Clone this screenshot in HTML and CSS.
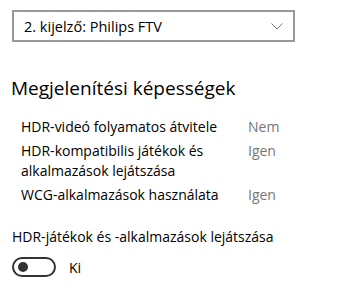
FILE: index.html
```html
<!DOCTYPE html>
<html lang="hu">
<head>
<meta charset="utf-8">
<link rel="stylesheet" href="styles.css">
</head>
<body>
<div class="page">
  <div class="select">
    <span class="select-text">2. kijelző: Philips FTV</span>
    <svg class="chev" width="12" height="7" viewBox="0 0 12 7"><path d="M0.5 0.5 L6 6 L11.5 0.5" fill="none" stroke="#777" stroke-width="1"/></svg>
  </div>
  <h2 class="heading">Megjelenítési képességek</h2>
  <div class="caps">
    <div class="cap-row"><span class="cap-name">HDR-videó folyamatos átvitele</span><span class="cap-val">Nem</span></div>
    <div class="cap-row"><span class="cap-name">HDR-kompatibilis játékok és alkalmazások lejátszása</span><span class="cap-val">Igen</span></div>
    <div class="cap-row"><span class="cap-name">WCG-alkalmazások használata</span><span class="cap-val">Igen</span></div>
  </div>
  <div class="label">HDR-játékok és -alkalmazások lejátszása</div>
  <div class="toggle-row">
    <span class="toggle"><span class="knob"></span></span>
    <span class="toggle-text">Ki</span>
  </div>
</div>
</body>
</html>
```
FILE: styles.css
```css
html, body { margin: 0; padding: 0; background: #fff; }
body { font-family: "Open Sans", "Noto Sans", sans-serif; color: #000; }
.page { padding: 10px 0 0 12px; }
.select {
  height: 28px;
  border: 2px solid #999;
  display: flex; align-items: center; justify-content: space-between;
  padding: 0 10px 0 10px; box-sizing: content-box;
  width: 259px;
}
.select-text { font-size: 14.5px; }
.chev { margin-top: 1px; }
.heading { font-weight: 400; font-size: 19px; margin: 33px 0 0 -1px; line-height: 26px; }
.caps { padding-left: 9px; margin-top: 16px; }
.cap-row { display: grid; grid-template-columns: 227px auto; font-size: 14px; line-height: 20px; margin-bottom: 4px; }
.cap-name { width: 200px; }
.cap-val { color: #767676; }
.label { font-size: 14px; margin-top: 22px; line-height: 20px; }
.toggle-row { display: flex; align-items: center; margin-top: 10px; }
.toggle { height: 16px; border: 2px solid #333; border-radius: 10px; display: flex; align-items: center; padding-left: 4px; box-sizing: content-box; width: 36px; }
.knob { width: 10px; height: 10px; border-radius: 50%; background: #333; }
.toggle-text { font-size: 14px; margin-left: 13px; }
```
